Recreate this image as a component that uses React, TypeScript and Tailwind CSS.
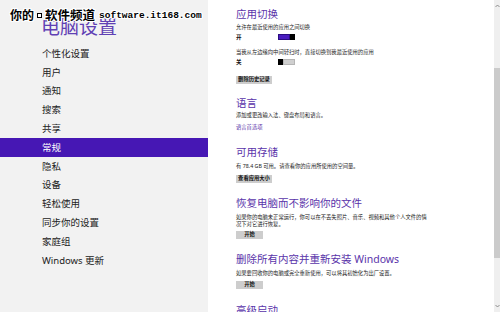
import React from "react";

const FONT = "'Noto Sans', 'Noto Sans CJK SC', sans-serif";

const menu = [
  "个性化设置",
  "用户",
  "通知",
  "搜索",
  "共享",
  "常规",
  "隐私",
  "设备",
  "轻松使用",
  "同步你的设置",
  "家庭组",
  "Windows 更新",
];

function Heading({ children, mt }: { children: React.ReactNode; mt: string }) {
  return (
    <div className={`${mt} text-[10.5px] leading-[12px] text-[#5a34aa] whitespace-nowrap`}>{children}</div>
  );
}

function Small({ children, className = "" }: { children: React.ReactNode; className?: string }) {
  return <div className={`text-[5.3px] leading-[7px] text-[#222] whitespace-nowrap ${className}`}>{children}</div>;
}

function Btn({ children, className = "" }: { children: React.ReactNode; className?: string }) {
  return (
    <div className={`flex items-center justify-center bg-[#cdcdcd] text-[5.3px] font-semibold text-[#111] ${className}`}>
      {children}
    </div>
  );
}

export default function App() {
  return (
    <div className="relative flex h-[312px] w-[500px] overflow-hidden bg-white" style={{ fontFamily: FONT }}>
      {/* watermark */}
      <div className="absolute left-[10px] top-[8px] z-10 flex items-center gap-[2px] font-bold text-black [text-shadow:1px_0_#fff,-1px_0_#fff,0_1px_#fff,0_-1px_#fff,1px_1px_#fff,-1px_-1px_#fff,1px_-1px_#fff,-1px_1px_#fff]">
        <span className="text-[12px] leading-[15px]">你的</span>
        <span className="mx-[1px] inline-block h-[5px] w-[5px] border border-black bg-white"></span>
        <span className="text-[12.5px] leading-[15px]">软件频道</span>
        <span className="ml-[2px] text-[9.5px] leading-[15px]" style={{ fontFamily: "'Liberation Mono', monospace" }}>
          software.it168.com
        </span>
      </div>

      {/* left pane */}
      <aside className="flex w-[208px] flex-col bg-[#f2f2f2] pt-[17px]">
        <div className="pl-[41px] text-[19px] leading-[20px] text-[#6040b4]">电脑设置</div>
        <div className="mt-[7.5px] flex flex-col">
          {menu.map((m) => (
            <div
              key={m}
              className={`flex h-[18.8px] items-center pl-[42px] text-[9.5px] whitespace-nowrap ${
                m === "常规" ? "bg-[#4617b4] text-white" : "text-[#222]"
              }`}
            >
              {m}
            </div>
          ))}
        </div>
      </aside>

      {/* right pane */}
      <main className="flex flex-1 flex-col pl-[28px] pt-[8px]">
        <Heading mt="mt-0">应用切换</Heading>
        <Small className="mt-[3.5px]">允许在最近使用的应用之间切换</Small>
        <div className="mt-[3px] flex h-[7px] items-center">
          <span className="w-[42px] text-[5.5px] font-semibold text-[#111]">开</span>
          <div className="flex h-[6px] w-[17px]">
            <div className="w-[12px] border border-[#2a0d80] bg-[#4a1cc0]"></div>
            <div className="w-[5px] bg-black"></div>
          </div>
        </div>
        <Small className="mt-[8px]">当我从左边缘向中间轻扫时，直接切换到我最近使用的应用</Small>
        <div className="mt-[3px] flex h-[7px] items-center">
          <span className="w-[42px] text-[5.5px] font-semibold text-[#111]">关</span>
          <div className="flex h-[6px] w-[17px]">
            <div className="w-[4.5px] bg-black"></div>
            <div className="flex-1 border border-[#b5b5b5] bg-[#cfcfcf]"></div>
          </div>
        </div>
        <Btn className="mt-[10.5px] h-[9px] w-[36px]">删除历史记录</Btn>

        <Heading mt="mt-[13px]">语言</Heading>
        <Small className="mt-[3.5px]">添加或更改输入法、键盘布局和语言。</Small>
        <Small className="mt-[5px] !text-[#5a34aa]">语言首选项</Small>

        <Heading mt="mt-[14.5px]">可用存储</Heading>
        <Small className="mt-[5.5px]">有 78.4 GB 可用。请查看你的应用所使用的空间量。</Small>
        <Btn className="mt-[4.5px] h-[9px] w-[36px]">查看应用大小</Btn>

        <Heading mt="mt-[14px]">恢复电脑而不影响你的文件</Heading>
        <Small className="mt-[5.5px]">
          如果你的电脑未正常运行，你可以在不丢失照片、音乐、视频和其他个人文件的情
          <br />
          况下对它进行恢复。
        </Small>
        <Btn className="mt-[2.5px] h-[10px] w-[27px]">开始</Btn>

        <Heading mt="mt-[14px]">删除所有内容并重新安装 Windows</Heading>
        <Small className="mt-[5.5px]">如果要回收你的电脑或完全重新使用，可以将其初始化为出厂设置。</Small>
        <Btn className="mt-[3.5px] h-[9px] w-[27px]">开始</Btn>

        <Heading mt="mt-[15px]">高级启动</Heading>
      </main>

      {/* scrollbar */}
      <div className="flex w-[6px] flex-col bg-[#efefef]">
        <div className="flex h-[12px] items-center justify-center">
          <svg width="5" height="4" viewBox="0 0 5 4">
            <polyline points="0.5,3 2.5,1 4.5,3" fill="none" stroke="#777" strokeWidth="0.8" />
          </svg>
        </div>
        <div className="mt-[56px] h-[190px] bg-[#cbcbcb]"></div>
        <div className="flex-1"></div>
        <div className="flex h-[12px] items-center justify-center">
          <svg width="5" height="4" viewBox="0 0 5 4">
            <polyline points="0.5,1 2.5,3 4.5,1" fill="none" stroke="#777" strokeWidth="0.8" />
          </svg>
        </div>
      </div>
    </div>
  );
}
